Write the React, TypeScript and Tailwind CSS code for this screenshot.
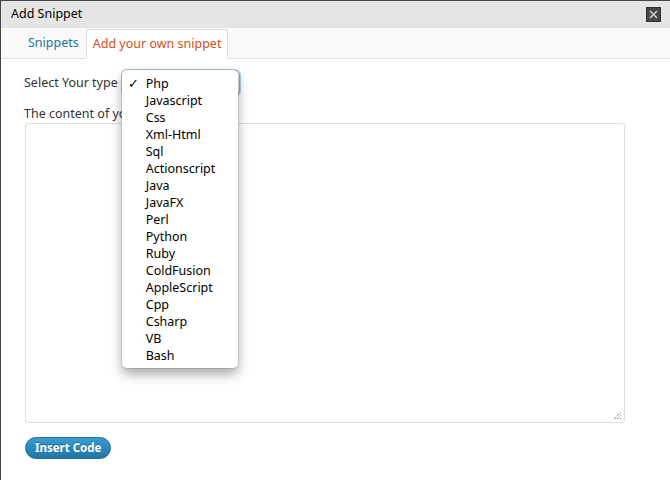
import React from "react";

const languages = [
  "Php",
  "Javascript",
  "Css",
  "Xml-Html",
  "Sql",
  "Actionscript",
  "Java",
  "JavaFX",
  "Perl",
  "Python",
  "Ruby",
  "ColdFusion",
  "AppleScript",
  "Cpp",
  "Csharp",
  "VB",
  "Bash",
];

function CloseButton() {
  return (
    <button className="w-[15px] h-[15px] bg-[#464646] border border-[#2f2f2f] flex items-center justify-center">
      <svg width="9" height="9" viewBox="0 0 9 9">
        <path d="M1 1 L8 8 M8 1 L1 8" stroke="#c9c9c9" strokeWidth="1.6" />
      </svg>
    </button>
  );
}

function ResizeGrip() {
  return (
    <svg width="9" height="9" viewBox="0 0 9 9" className="absolute right-[2px] bottom-[2px]">
      <path d="M1 8 L8 1 M4 8 L8 4 M7 8 L8 7" stroke="#555" strokeWidth="1" strokeDasharray="1 1" />
    </svg>
  );
}

export default function App() {
  return (
    <div className="w-[670px] h-[480px] bg-white border-t border-l border-[#464646] font-['Noto_Sans',sans-serif] text-[#333] flex flex-col overflow-hidden">
      {/* Title bar */}
      <div className="h-[27px] shrink-0 bg-[#e5e5e5] flex items-center justify-between pl-[10px] pr-[9px]">
        <span className="text-[12.5px] text-black">Add Snippet</span>
        <CloseButton />
      </div>

      {/* Tabs */}
      <div className="h-[31px] shrink-0 bg-[#f9f9f9] border-b border-[#dfdfdf] flex items-end pl-[16px]">
        <div className="h-[29px] pl-[11px] pr-[7px] flex items-center text-[12.5px] text-[#21759b]">Snippets</div>
        <div className="h-[30px] -mb-px px-[6px] flex items-center bg-white border border-b-0 border-[#dfdfdf] rounded-t-[3px] text-[12.5px] text-[#d54e21]">
          Add your own snippet
        </div>
      </div>

      {/* Form */}
      <div className="flex flex-col pl-[23px] pt-[11px]">
        <div className="flex items-center h-[26px] text-[12.5px]">
          <span>Select Your type</span>
          <div className="relative ml-[4px] w-[118px] h-[26px] rounded-[5px] border border-[#7fa9da] shadow-[0_0_0_1px_#b5cff0]">
            <div className="absolute left-[-1px] top-[-1px] w-[116px] h-[298px] bg-white rounded-[5px] shadow-[0_6px_12px_rgba(0,0,0,0.35),0_0_0_1px_rgba(0,0,0,0.08)] pt-[5px] pb-[3px] z-10">
              {languages.map((lang, i) => (
                <div key={lang} className="relative h-[17px] leading-[17px] pl-[24px] text-[12.5px] text-black">
                  {i === 0 && <span className="absolute left-[6px] top-0">✓</span>}
                  {lang}
                </div>
              ))}
            </div>
          </div>
        </div>

        <div className="mt-[9px] h-[17px] leading-[17px] text-[12.5px]">The content of your snippet :</div>

        <div className="relative mt-[1px] ml-[1px] w-[600px] h-[300px] border border-[#dfdfdf] rounded-[3px] bg-white">
          <ResizeGrip />
        </div>

        <div className="mt-[14px] ml-[1px]">
          <button className="h-[22px] px-[9px] rounded-full bg-gradient-to-b from-[#3a9bd0] to-[#1f76a6] border border-[#1f6f9c] text-white text-[11.5px] font-bold [text-shadow:0_-1px_0_rgba(0,0,0,0.3)] flex items-center">
            Insert Code
          </button>
        </div>
      </div>
    </div>
  );
}
